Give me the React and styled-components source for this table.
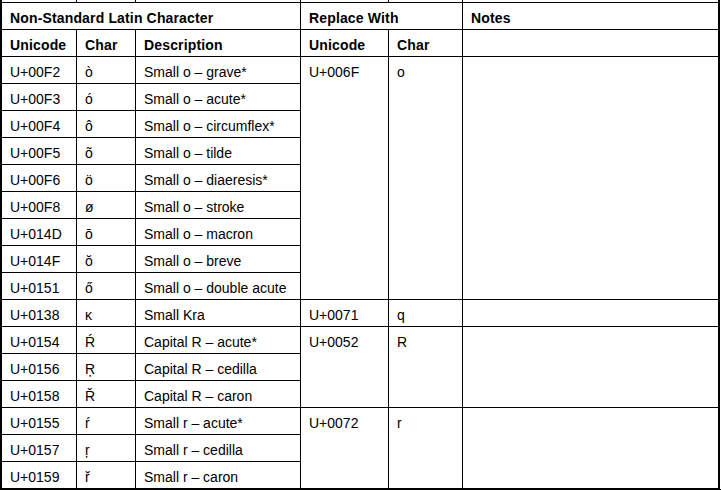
import React from "react"
import styled, { createGlobalStyle } from "styled-components"

const Global = createGlobalStyle`
    html, body {
        margin: 0;
        padding: 0;
        background: #fff;
        overflow: hidden;
    }
`

const groups = [
    {
        code: "U+006F", char: "o",
        rows: [
            ["U+00F2", "ò", "Small o – grave*"],
            ["U+00F3", "ó", "Small o – acute*"],
            ["U+00F4", "ô", "Small o – circumflex*"],
            ["U+00F5", "õ", "Small o – tilde"],
            ["U+00F6", "ö", "Small o – diaeresis*"],
            ["U+00F8", "ø", "Small o – stroke"],
            ["U+014D", "ō", "Small o – macron"],
            ["U+014F", "ŏ", "Small o – breve"],
            ["U+0151", "ő", "Small o – double acute"],
        ],
    },
    {
        code: "U+0071", char: "q",
        rows: [["U+0138", "ĸ", "Small Kra"]],
    },
    {
        code: "U+0052", char: "R",
        rows: [
            ["U+0154", "Ŕ", "Capital R – acute*"],
            ["U+0156", "Ŗ", "Capital R – cedilla"],
            ["U+0158", "Ř", "Capital R – caron"],
        ],
    },
    {
        code: "U+0072", char: "r",
        rows: [
            ["U+0155", "ŕ", "Small r – acute*"],
            ["U+0157", "ŗ", "Small r – cedilla"],
            ["U+0159", "ř", "Small r – caron"],
        ],
    },
]

export default () => {
    let line = 4
    return (
        <>
            <Global />
            <Table>
                {/* row above, cut off by the top of the window */}
                {[1, 2, 3, 4, 5, 6].map((c) => <Cell key={"p" + c} $col={c} $row={1} />)}

                <Cell $head $col={1} $span={3} $row={2}>Non-Standard Latin Character</Cell>
                <Cell $head $col={4} $span={2} $row={2}>Replace With</Cell>
                <Cell $head $col={6} $row={2}>Notes</Cell>

                <Cell $head $col={1} $row={3}>Unicode</Cell>
                <Cell $head $col={2} $row={3}>Char</Cell>
                <Cell $head $col={3} $row={3}>Description</Cell>
                <Cell $head $col={4} $row={3}>Unicode</Cell>
                <Cell $head $col={5} $row={3}>Char</Cell>
                <Cell $col={6} $row={3} />

                {groups.map((g) => {
                    const start = line
                    line += g.rows.length
                    return (
                        <React.Fragment key={g.code}>
                            {g.rows.map((r, i) => (
                                <React.Fragment key={r[0]}>
                                    <Cell $col={1} $row={start + i}>{r[0]}</Cell>
                                    <Cell $col={2} $row={start + i}>{r[1]}</Cell>
                                    <Cell $col={3} $row={start + i}>{r[2]}</Cell>
                                </React.Fragment>
                            ))}
                            <Cell $col={4} $row={start} $rows={g.rows.length}>{g.code}</Cell>
                            <Cell $col={5} $row={start} $rows={g.rows.length}>{g.char}</Cell>
                            <Cell $col={6} $row={start} $rows={g.rows.length} />
                        </React.Fragment>
                    )
                })}
            </Table>
        </>
    )
}

const Table = styled.div`
    display: grid;
    grid-template-columns: 75px 59px 165px 88px 74px 257px;
    grid-auto-rows: 27px;
    width: 720px;
    margin-top: -24px;
    border-left: 2px solid #000;
    border-bottom: 2px solid #000;
    font-family: "Liberation Sans", Arial, sans-serif;
    font-size: 14px;
    line-height: 16px;
    color: #000;
`

const Cell = styled.div`
    box-sizing: border-box;
    grid-column: ${(p) => p.$col} / span ${(p) => p.$span || 1};
    grid-row: ${(p) => p.$row} / span ${(p) => p.$rows || 1};
    padding: 7px 8px 0 8px;
    border-right: ${(p) => (p.$col + (p.$span || 1) - 1 === 6 ? "2px" : "1px")} solid #000;
    border-bottom: 1px solid #000;
    font-weight: ${(p) => (p.$head ? "bold" : "normal")};
    letter-spacing: ${(p) => (p.$head ? "0.15px" : "0")};
    white-space: nowrap;
`
